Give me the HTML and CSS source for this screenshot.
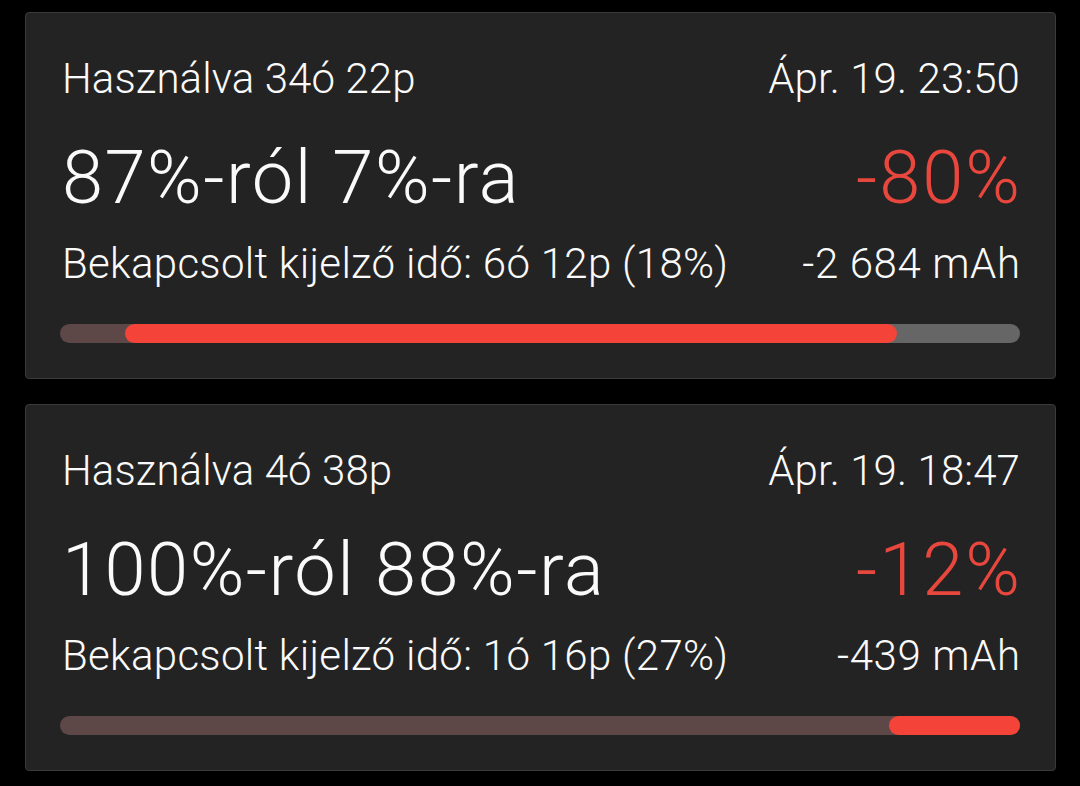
FILE: index.html
```html
<!DOCTYPE html>
<html lang="hu">
<head>
<meta charset="utf-8">
<link rel="stylesheet" href="styles.css">
<title>Akkumulátor</title>
</head>
<body>
<div class="list">
  <section class="card">
    <div class="row small">
      <span>Használva 34ó 22p</span>
      <span>Ápr. 19. 23:50</span>
    </div>
    <div class="row big">
      <span>87%-ról 7%-ra</span>
      <span class="drop">-80%</span>
    </div>
    <div class="row small third">
      <span>Bekapcsolt kijelző idő: 6ó 12p (18%)</span>
      <span class="mah">-2 684 mAh</span>
    </div>
    <div class="track track-split">
      <div class="fill" style="margin-left:65px;width:772px"></div>
    </div>
  </section>
  <section class="card">
    <div class="row small">
      <span>Használva 4ó 38p</span>
      <span>Ápr. 19. 18:47</span>
    </div>
    <div class="row big">
      <span>100%-ról 88%-ra</span>
      <span class="drop">-12%</span>
    </div>
    <div class="row small third">
      <span>Bekapcsolt kijelző idő: 1ó 16p (27%)</span>
      <span class="mah">-439 mAh</span>
    </div>
    <div class="track track-used">
      <div class="fill" style="margin-left:829px;width:131px"></div>
    </div>
  </section>
</div>
</body>
</html>
```

FILE: styles.css
```css
* { box-sizing: border-box; }
html, body { margin: 0; padding: 0; }
body {
  background: #000;
  width: 1080px;
  height: 786px;
  overflow: hidden;
  font-family: Roboto, "Noto Sans", sans-serif;
  font-weight: 300;
  color: #fafafa;
}
.list {
  padding: 12px 24px 0 25px;
  display: flex;
  flex-direction: column;
  gap: 25px;
}
.card {
  width: 1031px;
  height: 367px;
  background: #232323;
  border: 1px solid #3a3a3a;
  border-radius: 4px;
  padding: 41px 35px 0 34px;
}
.row {
  display: flex;
  justify-content: space-between;
  align-items: baseline;
  white-space: nowrap;
}
.row > span:first-child { margin-left: 2px; }
.small {
  font-size: 42px;
  line-height: 50px;
  letter-spacing: 0.1px;
}
.big {
  font-size: 74px;
  line-height: 80px;
  letter-spacing: 1.5px;
  margin-top: 34px;
}
.third { margin-top: 21px; }
.third > span:first-child { letter-spacing: 0.3px; }
.drop { color: #e8473d; letter-spacing: 2px; margin-right: -2px; }
.mah { letter-spacing: 0.6px; margin-right: -0.6px; }
.track {
  margin-top: 35px;
  height: 19px;
  border-radius: 10px;
  display: flex;
}
.track-split { background: linear-gradient(to right, #5d4847 0, #5d4847 400px, #666 400px, #666 100%); }
.track-used { background: #5d4847; }
.fill {
  height: 19px;
  border-radius: 10px;
  background: #f4443a;
}
```
